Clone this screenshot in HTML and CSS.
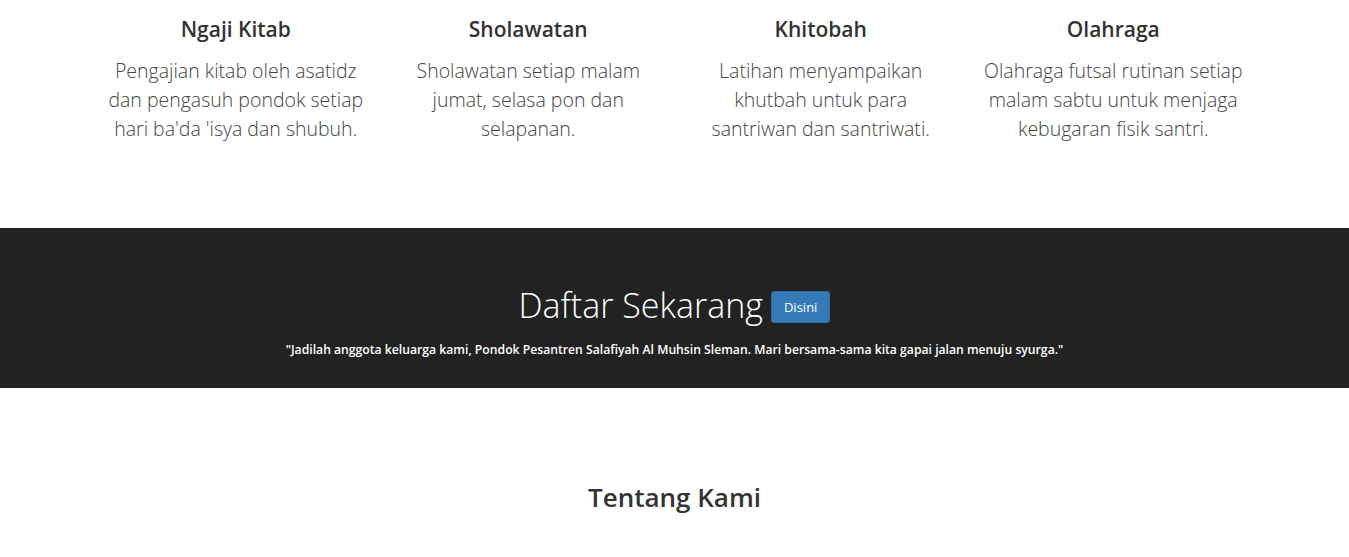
FILE: index.html
```html
<!DOCTYPE html>
<html lang="id">
<head>
<meta charset="utf-8">
<title>Pondok Pesantren Salafiyah Al Muhsin</title>
<link rel="stylesheet" href="styles.css">
</head>
<body>
<section class="features">
  <div class="container">
    <div class="row">
      <div class="col">
        <h3>Ngaji Kitab</h3>
        <p>Pengajian kitab oleh asatidz dan pengasuh pondok setiap hari ba'da 'isya dan shubuh.</p>
      </div>
      <div class="col">
        <h3>Sholawatan</h3>
        <p>Sholawatan setiap malam jumat, selasa pon dan selapanan.</p>
      </div>
      <div class="col">
        <h3>Khitobah</h3>
        <p>Latihan menyampaikan khutbah untuk para santriwan dan santriwati.</p>
      </div>
      <div class="col">
        <h3>Olahraga</h3>
        <p>Olahraga futsal rutinan setiap malam sabtu untuk menjaga kebugaran fisik santri.</p>
      </div>
    </div>
  </div>
</section>
<section class="cta">
  <h2>Daftar Sekarang <a class="btn" href="#">Disini</a></h2>
  <p>"Jadilah anggota keluarga kami, Pondok Pesantren Salafiyah Al Muhsin Sleman. Mari bersama-sama kita gapai jalan menuju syurga."</p>
</section>
<section class="about">
  <h2>Tentang Kami</h2>
</section>
</body>
</html>
```
FILE: styles.css
```css
* { box-sizing: border-box; }
body {
  margin: 0;
  font-family: "Open Sans", "Noto Sans", sans-serif;
  color: #333;
  background: #fff;
}
.container {
  width: 1170px;
  margin: 0 auto;
}
.row {
  display: flex;
}
.col {
  width: 25%;
  padding: 0 15px;
  text-align: center;
}
.features {
  padding-top: 13px;
  height: 228px;
}
.features h3 {
  margin: 0 0 11px;
  font-size: 21px;
  font-weight: 600;
  line-height: 32px;
  color: #333;
}
.features p {
  margin: 0 auto;
  font-size: 19.5px;
  font-weight: 300;
  line-height: 29px;
  color: #444;
}
.cta {
  background: #222;
  color: #fff;
  height: 160px;
  text-align: center;
  padding-top: 55px;
}
.cta h2 {
  margin: 0;
  font-size: 34px;
  font-weight: 300;
  line-height: 44px;
  display: flex;
  justify-content: center;
  align-items: center;
  gap: 8px;
}
.btn {
  display: inline-block;
  background: #337ab7;
  border: 1px solid #2e6da4;
  border-radius: 3px;
  color: #fff;
  text-decoration: none;
  font-size: 13px;
  font-weight: 400;
  line-height: 18px;
  padding: 6px 12px;
  margin-top: 4px;
  height: 32px;
}
.cta p {
  margin: 13px 0 0;
  font-size: 12.2px;
  font-weight: 600;
  line-height: 20px;
}
.about {
  text-align: center;
  padding-top: 92px;
}
.about h2 {
  margin: 0;
  font-size: 26px;
  font-weight: 600;
  line-height: 34px;
  color: #333;
}
```
